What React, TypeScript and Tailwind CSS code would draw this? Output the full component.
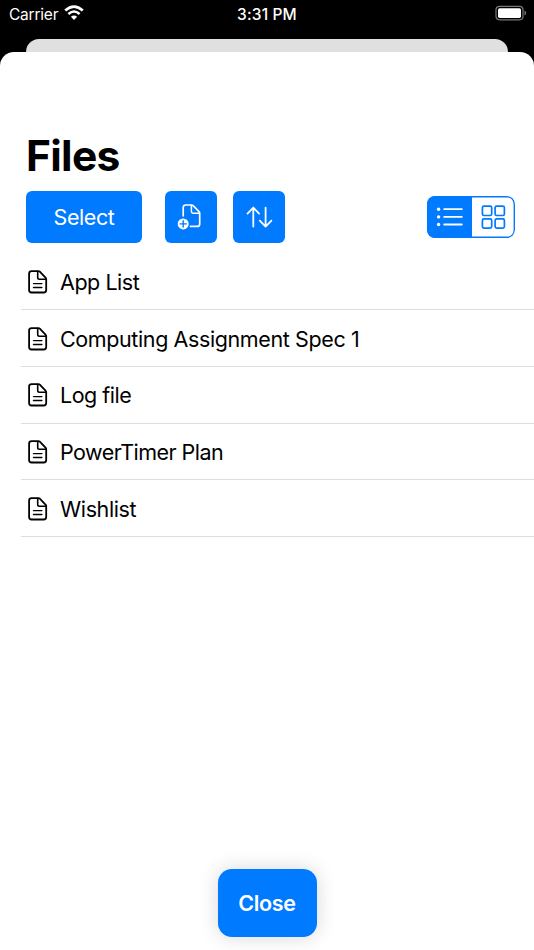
const files = [
  { name: 'App List', spacing: 'tracking-[-0.45px]' },
  { name: 'Computing Assignment Spec 1', spacing: 'tracking-[-0.39px]' },
  { name: 'Log file', spacing: 'tracking-[-0.5px]' },
  { name: 'PowerTimer Plan', spacing: 'tracking-[-0.52px]' },
  { name: 'Wishlist', spacing: 'tracking-[-0.38px]' },
];

function WifiIcon() {
  return (
    <svg className="ml-[6px] h-[16px] w-[20px]" viewBox="0 0 20 16" fill="none" stroke="white">
      <path d="M1.2 5.6 Q10 -2.2 18.8 5.6" strokeWidth="2.7" />
      <path d="M4.4 9 Q10 4 15.6 9" strokeWidth="2.5" />
      <path d="M10 15 L6.9 11.8 Q10 9.2 13.1 11.8 Z" fill="white" stroke="none" />
    </svg>
  );
}

function BatteryIcon() {
  return (
    <svg className="h-[16px] w-[33px]" viewBox="0 0 33 16">
      <rect x="1" y="1.3" width="27" height="13.5" rx="3.5" fill="none" stroke="#777" strokeWidth="1.2" />
      <rect x="3" y="3.3" width="23" height="9.6" rx="1.7" fill="white" />
      <path d="M29.5 5.5 Q31.2 6.1 31.2 8.1 Q31.2 9.9 29.5 10.6 Z" fill="#777" />
    </svg>
  );
}

function FileIcon() {
  return (
    <svg className="h-[24px] w-[20px]" viewBox="0 0 20 24" fill="none" stroke="black" strokeWidth="1.8" strokeLinejoin="round" strokeLinecap="round">
      <path d="M10.3 1.1H3.6Q1.1 1.1 1.1 3.6V20Q1.1 22.5 3.6 22.5H15.7Q18.2 22.5 18.2 20V9.3Q18.2 8.3 17.5 7.6L11.8 1.7Q11.2 1.1 10.3 1.1Z" />
      <path d="M9.7 1.5V7.6Q9.7 9.3 11.4 9.3H17.8" strokeWidth="1.6" />
      <path d="M5.5 13.6H13.9M5.5 17.5H13.9" strokeWidth="1.4" />
    </svg>
  );
}

function NewFileIcon() {
  return (
    <svg className="h-[52px] w-[52px]" viewBox="165 191 52 52" fill="none" stroke="white" strokeWidth="1.7" strokeLinecap="round" strokeLinejoin="round">
      <path d="M183.2 215.8V207.5Q183.2 205 185.7 205H191.5Q192.4 205 193.1 205.7L199 211.7Q199.7 212.4 199.7 213.4V223.9Q199.7 226.4 197.2 226.4H190.5" />
      <path d="M191.4 205.4V211.6Q191.4 213.3 193.1 213.3H199.3" strokeWidth="1.5" />
      <circle cx="183.2" cy="223.9" r="5.5" fill="white" stroke="none" />
      <path d="M180.1 223.9H186.3M183.2 220.8V227" stroke="#007aff" strokeWidth="1.4" />
    </svg>
  );
}

function SortIcon() {
  return (
    <svg className="h-[52px] w-[52px]" viewBox="233 191 52 52" fill="none" stroke="white" strokeWidth="1.8" strokeLinecap="round" strokeLinejoin="round">
      <path d="M253.3 226.5V207.7M247.5 213.6L253.3 207.6L259.1 213.6" />
      <path d="M265.6 207.7V226.5M259.8 220.6L265.6 226.6L271.4 220.6" />
    </svg>
  );
}

function ListIcon() {
  return (
    <svg className="h-[42px] w-[45px]" viewBox="427 196 45 42" stroke="white" strokeWidth="1.8" strokeLinecap="round">
      <path d="M444.2 209.2H461.8M444.2 216.9H461.8M444.2 224.5H461.8" />
      <g fill="white" stroke="none">
        <circle cx="438.6" cy="209.2" r="1.7" />
        <circle cx="438.6" cy="216.9" r="1.7" />
        <circle cx="438.6" cy="224.5" r="1.7" />
      </g>
    </svg>
  );
}

function GridIcon() {
  return (
    <svg className="h-[42px] w-[43px]" viewBox="472 196 43 42" fill="none" stroke="#007aff" strokeWidth="1.7">
      <rect x="482.4" y="206.2" width="9.3" height="9.3" rx="1.6" />
      <rect x="495.1" y="206.2" width="9.3" height="9.3" rx="1.6" />
      <rect x="482.4" y="218.8" width="9.3" height="9.3" rx="1.6" />
      <rect x="495.1" y="218.8" width="9.3" height="9.3" rx="1.6" />
    </svg>
  );
}

export default function App() {
  return (
    <div className="flex h-[950px] w-[534px] flex-col overflow-hidden bg-black font-['Inter',sans-serif]">
      <header className="grid h-[39px] shrink-0 grid-cols-3 items-start text-white">
        <div className="flex pt-[5px] pl-[9px]">
          <span className="pt-px text-[15.5px] leading-[18px] tracking-[-0.22px]">Carrier</span>
          <WifiIcon />
        </div>
        <div className="pt-[6px] text-center text-[15.5px] leading-[18px] font-medium tracking-[0.15px]">3:31 PM</div>
        <div className="flex justify-end pt-[5px] pr-[6px]">
          <BatteryIcon />
        </div>
      </header>
      <div className="mx-[26px] h-[13px] shrink-0 rounded-t-[13px] bg-[#e0e0e0]" />
      <main className="flex min-h-0 flex-1 flex-col rounded-t-[14px] bg-white">
        <h1 className="mt-[78px] ml-[26px] h-[52px] text-[42.5px] leading-[52px] font-bold tracking-[-0.7px]">Files</h1>
        <div className="mt-[9px] flex h-[52px] shrink-0 items-start pr-[19px] pl-[26px] text-white">
          <button className="h-[51.5px] w-[116px] rounded-[6px] bg-[#007aff] pt-[1.5px] text-[21.5px] tracking-[-0.4px]">Select</button>
          <button className="ml-[23px] h-[51.5px] w-[52px] rounded-[6px] bg-[#007aff]">
            <NewFileIcon />
          </button>
          <button className="ml-[16px] h-[51.5px] w-[52px] rounded-[6px] bg-[#007aff]">
            <SortIcon />
          </button>
          <div className="relative mt-[5px] ml-auto flex h-[41.5px] w-[88px] overflow-hidden rounded-[8px] bg-white">
            <button className="w-[45px] bg-[#007aff]">
              <ListIcon />
            </button>
            <button className="w-[43px]">
              <GridIcon />
            </button>
            <span className="pointer-events-none absolute inset-0 rounded-[8px] shadow-[inset_0_0_0_1.4px_#007aff]" />
          </div>
        </div>
        <ul className="mt-[10.3px] ml-[21px]">
          {files.map((file) => (
            <li key={file.name} className="flex h-[56.75px] items-center border-b border-[#dedede] pt-[1.5px] pl-[7px]">
              <FileIcon />
              <span className={`ml-[12px] text-[21.5px] leading-[28px] ${file.spacing}`}>{file.name}</span>
            </li>
          ))}
        </ul>
        <button className="mx-auto mt-auto mb-[13.5px] h-[67.5px] w-[99px] shrink-0 rounded-[14px] bg-[#007aff] pt-[1.5px] text-[21.5px] font-semibold tracking-[-0.3px] text-white shadow-[0_0_20px_rgba(0,0,0,0.16)]">
          Close
        </button>
      </main>
    </div>
  );
}
